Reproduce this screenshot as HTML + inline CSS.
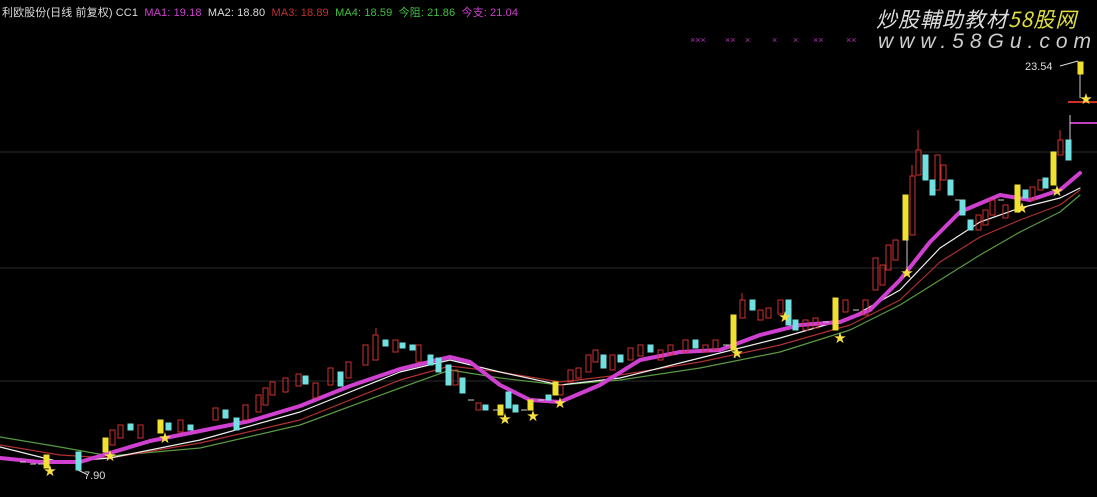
<!DOCTYPE html>
<html><head><meta charset="utf-8"><style>
html,body{margin:0;padding:0;background:#000;width:1097px;height:497px;overflow:hidden}
.hd{position:absolute;left:2px;top:4px;font:11px "Liberation Sans","Noto Sans CJK SC",sans-serif;color:#ddd;white-space:nowrap;letter-spacing:0.1px}
.wm1{position:absolute;left:876px;top:4px;font:italic 21px "Noto Sans CJK SC",sans-serif;color:#ddd;letter-spacing:1px}
.wm2{position:absolute;left:878px;top:30px;font:italic 21px "Liberation Sans",sans-serif;color:#ccc;letter-spacing:6px}
</style></head><body>
<svg width="1097" height="497" style="position:absolute;left:0;top:0">
<g stroke="#1e1e1e" stroke-width="1.5">
<line x1="0" y1="152" x2="1097" y2="152"/><line x1="0" y1="268" x2="1097" y2="268"/><line x1="0" y1="381" x2="1097" y2="381"/>
</g>
<g fill="#b030b0" font-size="9" font-family="Liberation Sans">
<text x="690" y="43">×××</text><text x="725" y="43">××</text><text x="745" y="43">×</text><text x="772" y="43">×</text><text x="793" y="43">×</text><text x="813" y="43">××</text><text x="846" y="43">××</text>
</g>
<line x1="1068" y1="102" x2="1097" y2="102" stroke="#d03020" stroke-width="2"/>
<line x1="1070" y1="123" x2="1097" y2="123" stroke="#c040c0" stroke-width="2"/>
<g fill="none" stroke-width="1.2" stroke-linejoin="round" stroke-linecap="round">
<polyline stroke="#5a9a40" points="0,437 60,447 110,456 200,448 300,425 400,388 450,370 500,378 560,385 620,380 700,368 780,352 850,330 900,305 940,280 980,255 1020,232 1060,212 1080,195"/>
<polyline stroke="#b03030" points="0,445 60,455 110,458 200,443 300,420 400,380 450,366 500,372 560,382 620,375 700,362 780,345 850,325 900,300 940,262 980,237 1020,220 1060,205 1080,190"/>
<polyline stroke="#eee" points="0,447 60,462 110,458 200,440 300,412 400,372 450,360 500,372 560,385 620,378 700,358 780,338 850,318 900,290 940,248 980,222 1020,208 1060,198 1080,188"/>
<polyline stroke="#d040d0" stroke-width="4" points="0,458 40,462 80,462 110,453 150,441 200,431 250,421 300,406 350,386 400,369 450,357 470,362 500,385 530,400 560,402 600,385 640,360 680,352 720,350 760,335 800,325 840,322 870,310 900,280 930,242 960,212 1000,195 1030,200 1060,190 1080,173"/>
</g>
<g font-family="Liberation Sans" font-size="11" fill="#ddd">
<text x="84" y="479">7.90</text><text x="1025" y="70">23.54</text>
</g>
<polyline points="1060,66 1078,61" stroke="#ddd" fill="none"/>
<line x1="78" y1="470" x2="88" y2="475" stroke="#ddd"/>
<g stroke-width="1">
<g fill="none" stroke="#d03030">
<rect x="110" y="430" width="5" height="15"/><rect x="118" y="425" width="5" height="13"/><rect x="138" y="425" width="5" height="13"/><rect x="178" y="420" width="5" height="12"/><rect x="213" y="408" width="5" height="12"/><rect x="243" y="405" width="5" height="15"/><rect x="256" y="395" width="5" height="17"/><rect x="263" y="388" width="5" height="17"/><rect x="270" y="382" width="5" height="13"/><rect x="283" y="378" width="5" height="14"/><rect x="296" y="374" width="5" height="12"/><rect x="313" y="383" width="5" height="15"/><rect x="328" y="368" width="5" height="17"/><rect x="346" y="362" width="5" height="16"/><rect x="363" y="345" width="5" height="20"/><rect x="373" y="335" width="5" height="25"/><rect x="393" y="340" width="5" height="12"/><rect x="416" y="345" width="5" height="17"/><rect x="453" y="370" width="5" height="15"/><rect x="476" y="403" width="5" height="7"/><rect x="558" y="385" width="5" height="10"/><rect x="568" y="370" width="5" height="12"/><rect x="576" y="368" width="5" height="10"/><rect x="586" y="355" width="5" height="17"/><rect x="593" y="350" width="5" height="12"/><rect x="610" y="355" width="5" height="15"/><rect x="628" y="348" width="5" height="12"/><rect x="638" y="345" width="5" height="11"/><rect x="658" y="350" width="5" height="10"/><rect x="668" y="345" width="5" height="10"/><rect x="683" y="340" width="5" height="12"/><rect x="703" y="345" width="5" height="7"/><rect x="713" y="340" width="5" height="10"/><rect x="740" y="300" width="5" height="18"/><rect x="758" y="310" width="5" height="10"/><rect x="766" y="308" width="5" height="10"/><rect x="778" y="300" width="5" height="14"/><rect x="803" y="320" width="5" height="10"/><rect x="813" y="318" width="5" height="10"/><rect x="843" y="300" width="5" height="12"/><rect x="863" y="300" width="5" height="15"/><rect x="873" y="258" width="5" height="32"/><rect x="880" y="265" width="5" height="20"/><rect x="886" y="245" width="5" height="25"/><rect x="893" y="240" width="5" height="20"/><rect x="910" y="176" width="5" height="59"/><rect x="916" y="150" width="5" height="25"/><rect x="935" y="155" width="5" height="35"/><rect x="941" y="165" width="5" height="15"/><rect x="976" y="215" width="5" height="15"/><rect x="983" y="210" width="5" height="15"/><rect x="990" y="200" width="5" height="15"/><rect x="1003" y="205" width="5" height="13"/><rect x="1030" y="187" width="5" height="13"/><rect x="1038" y="180" width="5" height="10"/><rect x="1058" y="140" width="5" height="15"/>
<line x1="376" y1="328" x2="376" y2="335"/><line x1="918" y1="130" x2="918" y2="150"/><line x1="912" y1="165" x2="912" y2="176"/><line x1="1060" y1="130" x2="1060" y2="140"/><line x1="742" y1="293" x2="742" y2="300"/>
</g>
<g fill="#70e0e0" stroke="#70e0e0">
<rect x="76" y="452" width="5" height="18"/><rect x="128" y="424" width="5" height="6"/><rect x="166" y="423" width="5" height="7"/><rect x="188" y="425" width="5" height="5"/><rect x="223" y="410" width="5" height="8"/><rect x="234" y="418" width="5" height="12"/><rect x="303" y="376" width="5" height="8"/><rect x="338" y="372" width="5" height="14"/><rect x="383" y="340" width="5" height="6"/><rect x="400" y="343" width="5" height="5"/><rect x="410" y="345" width="5" height="5"/><rect x="428" y="355" width="5" height="10"/><rect x="436" y="358" width="5" height="14"/><rect x="446" y="365" width="5" height="20"/><rect x="460" y="378" width="5" height="15"/><rect x="483" y="405" width="5" height="5"/><rect x="506" y="392" width="5" height="16"/><rect x="513" y="405" width="5" height="7"/><rect x="546" y="395" width="5" height="5"/><rect x="601" y="355" width="5" height="13"/><rect x="618" y="355" width="5" height="7"/><rect x="648" y="345" width="5" height="7"/><rect x="693" y="340" width="5" height="8"/><rect x="750" y="300" width="5" height="10"/><rect x="786" y="300" width="5" height="25"/><rect x="793" y="320" width="5" height="10"/><rect x="923" y="155" width="5" height="25"/><rect x="930" y="180" width="5" height="15"/><rect x="948" y="180" width="5" height="15"/><rect x="960" y="200" width="5" height="15"/><rect x="968" y="220" width="5" height="10"/><rect x="1023" y="190" width="5" height="8"/><rect x="1043" y="178" width="5" height="10"/><rect x="1066" y="140" width="5" height="20"/>
</g>
<g fill="#f0e030" stroke="#f0e030">
<rect x="44" y="455" width="5" height="13"/><rect x="103" y="438" width="5" height="14"/><rect x="158" y="420" width="5" height="13"/><rect x="498" y="405" width="5" height="10"/><rect x="528" y="400" width="5" height="10"/><rect x="553" y="382" width="5" height="13"/><rect x="731" y="315" width="5" height="35"/><rect x="833" y="298" width="5" height="32"/><rect x="903" y="195" width="5" height="45"/><rect x="1015" y="185" width="5" height="27"/><rect x="1051" y="152" width="5" height="33"/><rect x="1078" y="62" width="5" height="12"/>
</g>
<g stroke="#ccc">
<line x1="1080" y1="74" x2="1080" y2="98"/><line x1="907" y1="240" x2="907" y2="270"/><line x1="1070" y1="115" x2="1070" y2="140"/><line x1="735" y1="350" x2="735" y2="358"/>
<line x1="468" y1="400" x2="474" y2="400"/><line x1="493" y1="410" x2="499" y2="410"/><line x1="521" y1="410" x2="527" y2="410"/><line x1="538" y1="400" x2="544" y2="400"/><line x1="723" y1="345" x2="729" y2="345"/><line x1="823" y1="322" x2="829" y2="322"/><line x1="853" y1="310" x2="859" y2="310"/><line x1="955" y1="200" x2="961" y2="200"/><line x1="998" y1="200" x2="1004" y2="200"/>
<line x1="20" y1="462" x2="26" y2="462"/><line x1="30" y1="464" x2="36" y2="464"/><line x1="38" y1="464" x2="44" y2="464"/>
</g>
</g>
<g fill="#f8e040" font-size="15" font-family="DejaVu Sans" text-anchor="middle">
<text x="50" y="476">★</text><text x="110" y="461">★</text><text x="165" y="443">★</text><text x="505" y="424">★</text><text x="533" y="421">★</text><text x="560" y="408">★</text><text x="737" y="358">★</text><text x="785" y="322">★</text><text x="840" y="343">★</text><text x="907" y="278">★</text><text x="1022" y="213">★</text><text x="1057" y="196">★</text><text x="1086" y="104">★</text>
</g>
</svg>
<div class="hd">利欧股份(日线 前复权) CC1 &nbsp;<span style="color:#d040d0">MA1: 19.18</span> &nbsp;MA2: 18.80 &nbsp;<span style="color:#c03030">MA3: 18.89</span> &nbsp;<span style="color:#40c040">MA4: 18.59 &nbsp;今阻: 21.86</span> &nbsp;<span style="color:#d040d0">今支: 21.04</span></div>
<div class="wm1">炒股輔助教材<span style="color:#e0e040">58股网</span></div>
<div class="wm2">www.58Gu.com</div>
</body></html>
